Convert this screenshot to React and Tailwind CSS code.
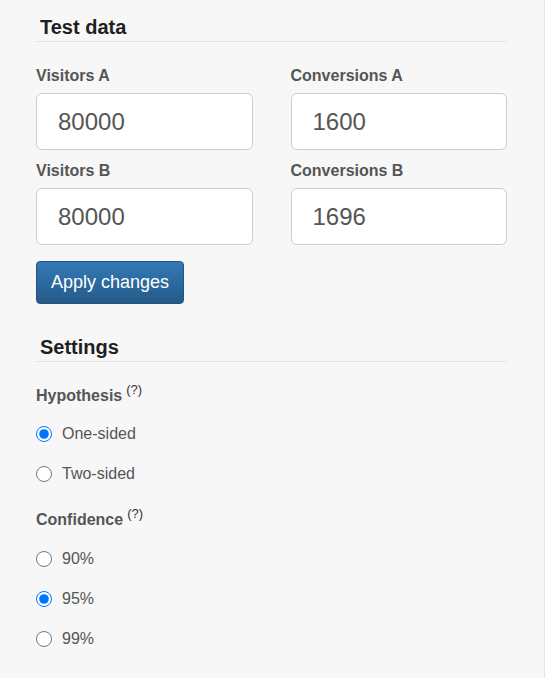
import { useState } from 'react';

const FONT = { fontFamily: '"Liberation Sans", Arial, sans-serif' };

function SectionTitle({ children, className = '' }) {
  return (
    <div className={`border-b border-[#e3e3e3] pb-[3px] ${className}`}>
      <h2 className="pl-1 text-[20px] font-bold leading-[22px] text-[#1f1f1f]">{children}</h2>
    </div>
  );
}

function Field({ label, value, onChange }) {
  return (
    <label className="flex flex-col">
      <span className="mb-[7px] text-[16px] font-bold leading-[20px] text-[#555]">{label}</span>
      <input
        type="text"
        value={value}
        onChange={(e) => onChange(e.target.value)}
        className="h-[57px] w-full rounded-[6px] border border-[#ccc] bg-white px-[21px] text-[24px] text-[#555] outline-none"
      />
    </label>
  );
}

// bold label with the little "(?)" hint raised after it
function Help({ children }) {
  return (
    <div className="h-[20px] text-[16px] font-bold leading-[20px] text-[#555]">
      {children}
      <span className="relative -top-[7px] ml-[4px] text-[13px] font-normal leading-none text-[#333]">(?)</span>
    </div>
  );
}

function RadioGroup({ name, options, value, onChange }) {
  return (
    <div className="flex flex-col">
      {options.map((opt) => (
        <label key={opt} className="flex h-[40px] cursor-pointer items-center gap-[10px]">
          <input
            type="radio"
            name={name}
            checked={value === opt}
            onChange={() => onChange(opt)}
            className="m-0 h-[16px] w-[16px] accent-[#0075ff]"
          />
          <span className="text-[16px] text-[#555]">{opt}</span>
        </label>
      ))}
    </div>
  );
}

export default function App() {
  const [data, setData] = useState({ va: '80000', ca: '1600', vb: '80000', cb: '1696' });
  const [hypothesis, setHypothesis] = useState('One-sided');
  const [confidence, setConfidence] = useState('95%');

  const set = (key) => (v) => setData((d) => ({ ...d, [key]: v }));

  return (
    <div className="min-h-[678px] w-[552px] bg-white" style={FONT}>
      <div className="min-h-[678px] w-[545px] border-r border-[#e6e6e6] bg-[#f7f7f7] px-[36px] pt-[16px]">
        <div className="w-[471px]">
          {/* Test data */}
          <SectionTitle>Test data</SectionTitle>

          <div className="mt-[24px] grid grid-cols-2 gap-x-[38px] gap-y-[11px]">
            <Field label="Visitors A" value={data.va} onChange={set('va')} />
            <Field label="Conversions A" value={data.ca} onChange={set('ca')} />
            <Field label="Visitors B" value={data.vb} onChange={set('vb')} />
            <Field label="Conversions B" value={data.cb} onChange={set('cb')} />
          </div>

          <button className="mt-[16px] h-[43px] w-[148px] rounded-[4px] border border-[#245580] bg-linear-to-b from-[#337ab7] to-[#265a88] text-[18px] text-white">
            Apply changes
          </button>

          {/* Settings */}
          <SectionTitle className="mt-[32px]">Settings</SectionTitle>

          <div className="mt-[24px]">
            <Help>Hypothesis</Help>
          </div>
          <div className="mt-[8px]">
            <RadioGroup
              name="hypothesis"
              options={['One-sided', 'Two-sided']}
              value={hypothesis}
              onChange={setHypothesis}
            />
          </div>

          <div className="mt-[16px]">
            <Help>Confidence</Help>
          </div>
          <div className="mt-[9px]">
            <RadioGroup
              name="confidence"
              options={['90%', '95%', '99%']}
              value={confidence}
              onChange={setConfidence}
            />
          </div>
        </div>
      </div>
    </div>
  );
}
